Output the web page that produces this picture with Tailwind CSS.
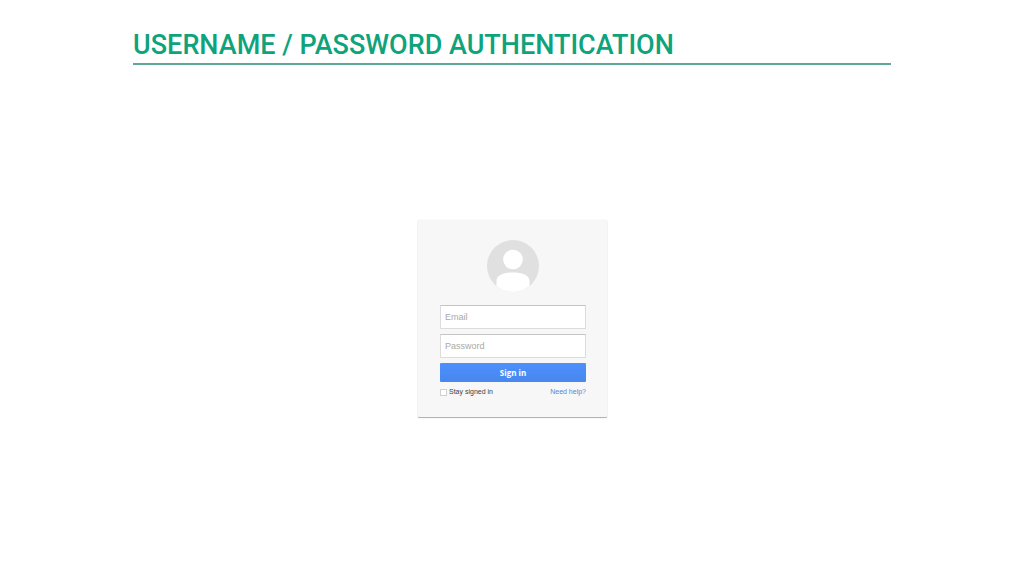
<!DOCTYPE html>
<html lang="en">
    <head>
        <meta charset="UTF-8" />
        <meta name="viewport" content="width=device-width, initial-scale=1.0" />
        <script src="https://cdn.jsdelivr.net/npm/@tailwindcss/browser@4"></script>
        <title>Username / Password Authentication</title>
    </head>
    <body class="min-h-screen bg-white font-['Liberation_Sans',Arial,sans-serif]">
        <header class="mx-[13%] border-b-2 border-[#5fa898] pt-[27px]">
            <h1 class="font-['Roboto',sans-serif] text-[27px] leading-9 font-medium whitespace-nowrap text-[#0fa37c]">
                USERNAME / PASSWORD AUTHENTICATION
            </h1>
        </header>

        <main class="flex justify-center pt-[155px] pl-px">
            <form class="w-[189px] rounded-[1px] bg-[#f7f7f7] pt-5 pr-[21px] pb-5 pl-[22px] shadow-[0_1px_1px_#00000050,0_0_1px_#00000030]">
                <svg class="mx-auto size-[52px]" viewBox="0 0 52 52" aria-hidden="true">
                    <circle cx="26" cy="26" r="26" fill="#e0e0e0" />
                    <circle cx="26" cy="19.500" r="9.800" fill="#fff" />
                    <path d="M9.500 46V41C9.500 35 17 32.500 26 32.500S42.500 35 42.500 41V46A26 26 0 0 1 9.500 46Z" fill="#fff" />
                </svg>

                <input
                    id="email"
                    type="email"
                    placeholder="Email"
                    aria-label="Email"
                    class="mt-[13px] block h-6 w-full border border-[#dcdcdc] border-t-[#c4c4c4] bg-white px-1 text-[9px] text-[#404040] placeholder:text-[#a9a9a9]"
                />

                <input
                    id="password"
                    type="password"
                    placeholder="Password"
                    aria-label="Password"
                    class="mt-[5px] block h-6 w-full border border-[#dcdcdc] border-t-[#c4c4c4] bg-white px-1 text-[9px] text-[#404040] placeholder:text-[#a9a9a9]"
                />

                <button
                    type="submit"
                    class="mt-[5px] block h-[19px] w-full rounded-[1px] bg-linear-to-b from-[#4d90fe] to-[#4787ed] pt-px font-['Open_Sans',sans-serif] text-[8px] font-bold text-white"
                >
                    Sign in
                </button>

                <div class="mt-[5px] flex items-center justify-between text-[7px] leading-[10px]">
                    <label for="stay" class="flex items-center gap-[2px] text-[#404040]">
                        <input id="stay" type="checkbox" class="size-[7px] appearance-none border border-[#d0d0d0] bg-white checked:bg-[#4d90fe]" />
                        Stay signed in
                    </label>
                    <a href="#" class="text-[#5585e0]">Need help?</a>
                </div>
            </form>
        </main>
    </body>
</html>
